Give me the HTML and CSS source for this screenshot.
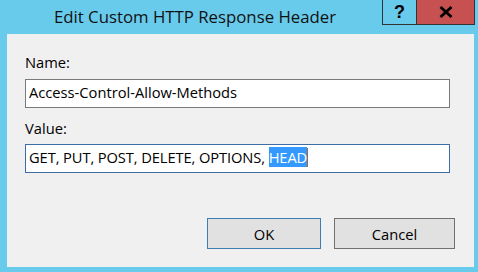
FILE: index.html
```html
<!DOCTYPE html>
<html lang="en">
<head>
    <meta charset="UTF-8">
    <title>Edit Custom HTTP Response Header</title>
    <link rel="stylesheet" href="styles.css">
</head>
<body>
    <div class="dialog">
        <div class="titlebar">
            <div class="title">Edit Custom HTTP Response Header</div>
            <div class="caption-buttons">
                <span class="cap-btn help">?</span>
                <span class="cap-btn close">
                    <svg width="14" height="12" viewBox="0 0 14 12">
                        <path d="M1.5 1 L12.5 11 M12.5 1 L1.5 11" stroke="#000" stroke-width="2.8"/>
                    </svg>
                </span>
            </div>
        </div>

        <div class="client">
            <label class="field-label">Name:</label>
            <div class="textbox">Access-Control-Allow-Methods</div>

            <label class="field-label value-label">Value:</label>
            <div class="textbox focused">GET, PUT, POST, DELETE, OPTIONS, <span class="selected">HEAD</span><span class="caret"></span></div>

            <div class="buttons">
                <button class="btn default">OK</button>
                <button class="btn cancel">Cancel</button>
            </div>
        </div>
    </div>
</body>
</html>
```

FILE: styles.css
```css
* {
    box-sizing: border-box;
}

body {
    margin: 0;
    background: #69cbec;
    font-family: 'Open Sans', 'Noto Sans', sans-serif;
    width: 478px;
    height: 272px;
    overflow: hidden;
}

.dialog {
    display: flex;
    flex-direction: column;
    height: 272px;
}

/* Title bar */
.titlebar {
    display: flex;
    height: 34px;
}

.title {
    flex: 1;
    text-align: center;
    padding-left: 8px;
    padding-top: 7px;
    font-size: 16.8px;
    color: #111;
    line-height: 20px;
    white-space: nowrap;
}

.caption-buttons {
    display: flex;
    align-items: flex-start;
    margin-right: 3px;
}

.cap-btn {
    display: flex;
    align-items: center;
    justify-content: center;
    height: 25px;
    border: 1px solid #333;
    border-top: none;
}

.cap-btn.help {
    width: 35px;
    font-family: 'Liberation Sans', sans-serif;
    font-weight: bold;
    font-size: 18px;
    color: #000;
}

.cap-btn.close {
    width: 58px;
    border-left: none;
    background: #c75050;
}

/* Client area */
.client {
    background: #f0f0f0;
    margin: 0 4px 5px 7px;
    flex: 1;
    padding: 19px 24px 0 18px;
    font-size: 14.7px;
}

.field-label {
    display: block;
    line-height: 18px;
    color: #000;
    margin-bottom: 8px;
}

.value-label {
    margin-top: 11px;
    margin-bottom: 7px;
}

.textbox {
    height: 29px;
    background: #fff;
    border: 1px solid #7a7a7a;
    padding: 0 3px 3px;
    line-height: 24px;
    color: #000;
    white-space: nowrap;
    overflow: hidden;
}

.textbox.focused {
    border-color: #3c6ea5;
    letter-spacing: -0.1px;
}

.selected {
    background: #3399ff;
    color: #fff;
}

.caret {
    display: inline-block;
    width: 1px;
    height: 19px;
    vertical-align: -4px;
    background: #b0662a;
}

/* Buttons */
.buttons {
    display: flex;
    margin-top: 45px;
    gap: 13px;
    padding-left: 182px;
    margin-right: -5px;
}

.btn {
    height: 31px;
    background: #e1e1e1;
    border: 1px solid #adadad;
    font-family: inherit;
    font-size: 14.7px;
    color: #000;
    padding: 0;
}

.btn.default {
    width: 114px;
    border-color: #3c7fb1;
}

.btn.cancel {
    width: 121px;
    border-color: #707070;
}
```
